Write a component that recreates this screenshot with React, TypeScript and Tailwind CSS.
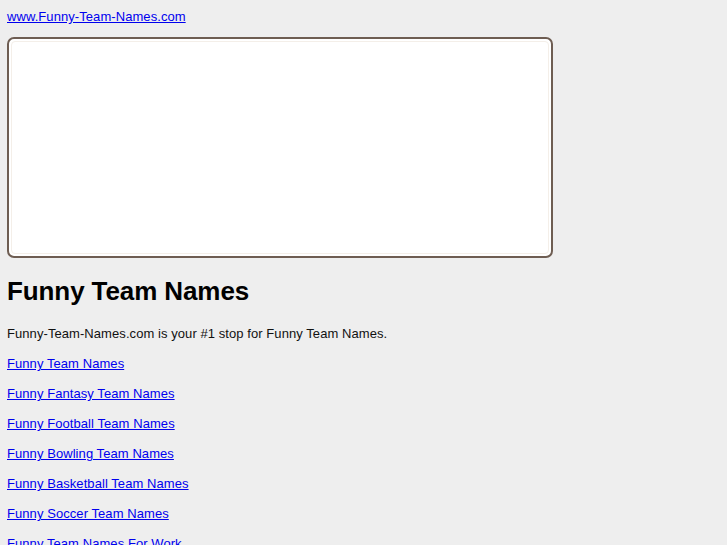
const links = [
  'Funny Team Names',
  'Funny Fantasy Team Names',
  'Funny Football Team Names',
  'Funny Bowling Team Names',
  'Funny Basketball Team Names',
  'Funny Soccer Team Names',
  'Funny Team Names For Work',
  'Funny Softball Team Names',
]

export default function App() {
  return (
    <div className="min-h-screen bg-[#eeeeee] px-[7px] pt-[8px] text-[13px] leading-[17px] tracking-[0.07px] text-[#111111] font-['Liberation_Sans',Arial,sans-serif]">
      <a href="#" className="block w-fit text-[#0000ee] underline">
        www.Funny-Team-Names.com
      </a>

      <div className="mt-[12px] w-[546px] h-[221px] rounded-[7px] border-2 border-[#6e5d52] bg-white p-[2px]">
        <div className="h-full w-full rounded-[4px] border border-[#f4efe9]" />
      </div>

      <h1 className="mt-[18px] mb-[19px] text-[26px] leading-[30px] font-bold tracking-[-0.1px] text-black">
        Funny Team Names
      </h1>

      <p className="mb-[13px]">Funny-Team-Names.com is your #1 stop for Funny Team Names.</p>

      {links.map((l) => (
        <p key={l} className="mb-[13px]">
          <a href="#" className="text-[#0000ee] underline">
            {l}
          </a>
        </p>
      ))}
    </div>
  )
}
